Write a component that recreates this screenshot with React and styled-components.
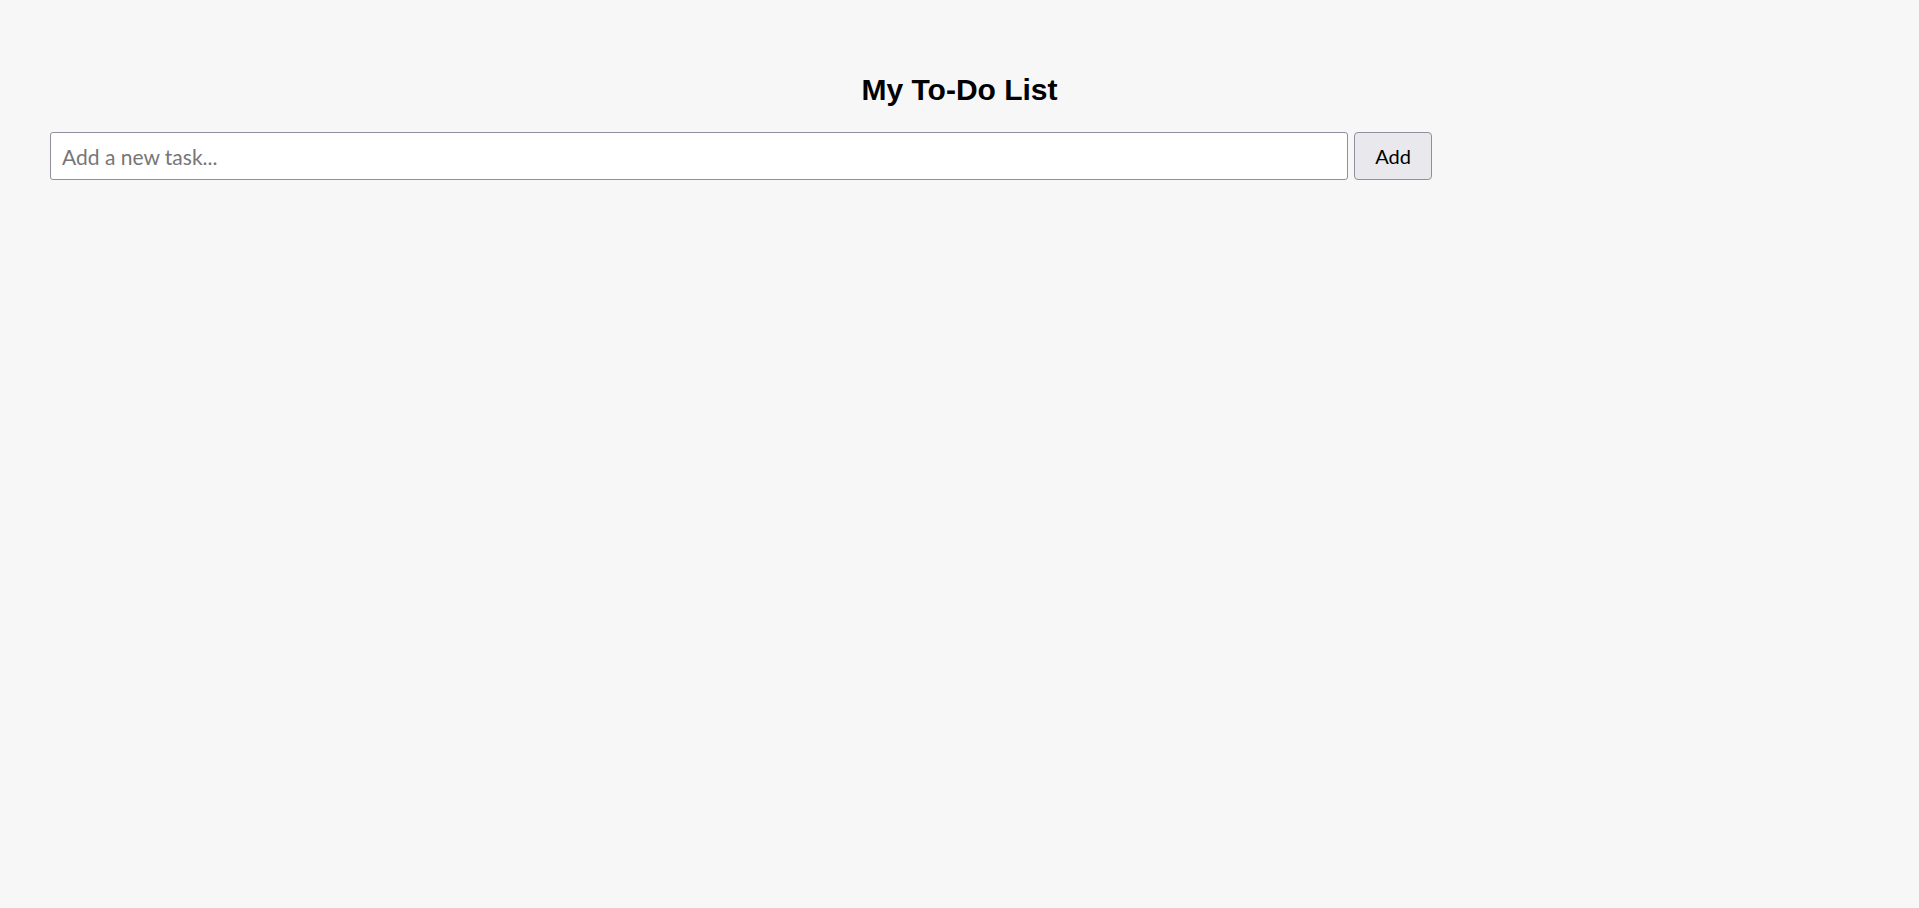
import React, { useState } from "react";
import styled, { createGlobalStyle } from "styled-components";

const GlobalStyle = createGlobalStyle`
  html, body {
    margin: 0;
    padding: 0;
    background: #f7f7f7;
    min-height: 100%;
  }
  body {
    font-family: "Liberation Sans", Arial, sans-serif;
  }
`;

const Page = styled.div`
  padding: 64px 50px 0;
`;

const Title = styled.h1`
  margin: 0 0 16px;
  text-align: center;
  font-family: "Liberation Sans", Arial, sans-serif;
  font-weight: 700;
  font-size: 30px;
  line-height: 52px;
  color: #000;
`;

const Form = styled.form`
  display: flex;
  gap: 6px;
  align-items: stretch;
`;

const TaskInput = styled.input`
  box-sizing: border-box;
  width: 1298px;
  height: 48px;
  padding: 0 11px;
  border: 1px solid #8f8f9d;
  border-radius: 3px;
  background: #fff;
  font-family: Lato, "Liberation Sans", sans-serif;
  font-size: 21px;
  color: #000;
  outline: none;

  &::placeholder {
    color: #767676;
  }
`;

const AddButton = styled.button`
  box-sizing: border-box;
  width: 78px;
  height: 48px;
  border: 1px solid #8f8f9d;
  border-radius: 4px;
  background: #e9e9ed;
  font-family: Lato, "Liberation Sans", sans-serif;
  font-size: 20px;
  color: #000;
  cursor: pointer;
`;

const App = () => {
  const [task, setTask] = useState("");

  const handleSubmit = (e) => {
    e.preventDefault();
    setTask("");
  };

  return (
    <>
      <GlobalStyle />
      <Page>
        <Title>My To-Do List</Title>
        <Form onSubmit={handleSubmit}>
          <TaskInput
            value={task}
            onChange={(e) => setTask(e.target.value)}
            placeholder="Add a new task..."
          />
          <AddButton type="submit">Add</AddButton>
        </Form>
      </Page>
    </>
  );
};

export default App;
